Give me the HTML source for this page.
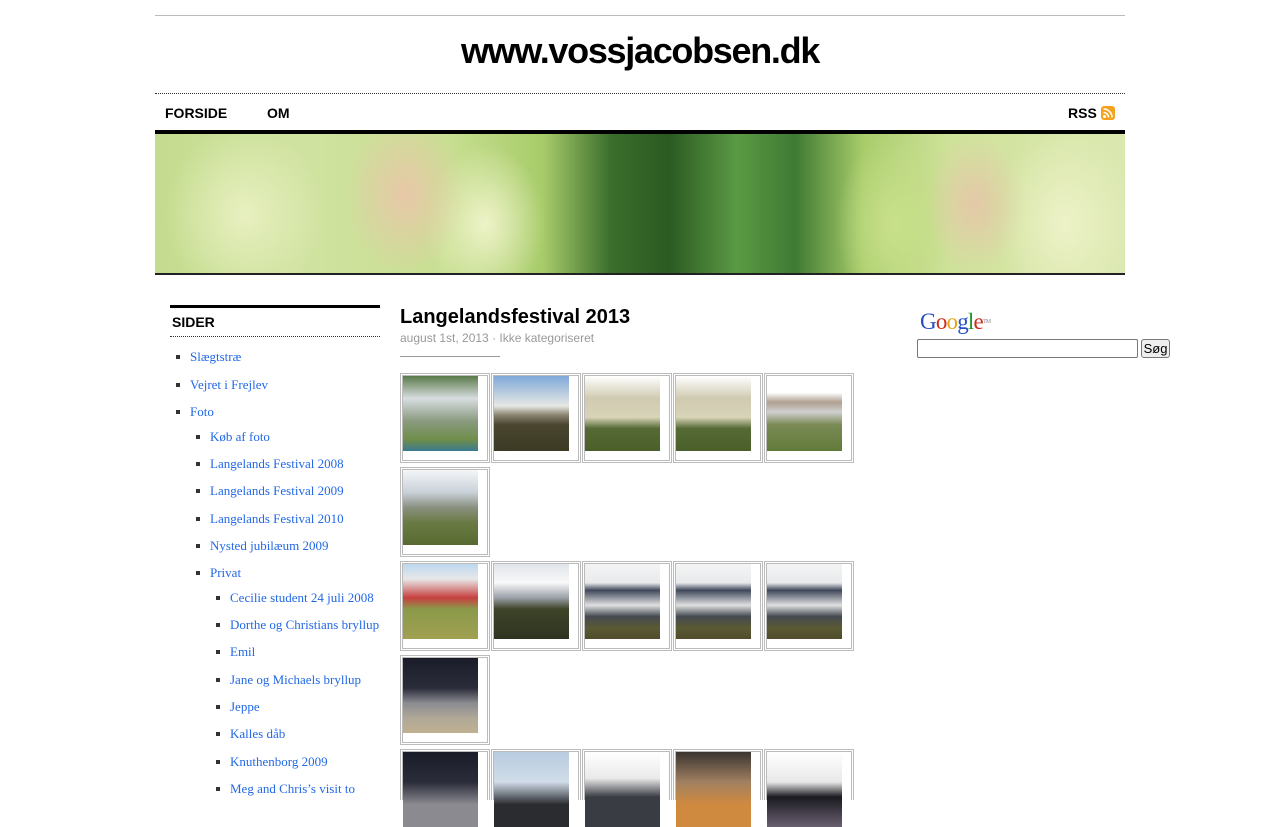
<!DOCTYPE html>
<html><head><meta charset="utf-8"><style>
*{margin:0;padding:0;box-sizing:border-box}
body{width:1280px;height:800px;overflow:hidden;background:#fff;font-family:"Liberation Sans",sans-serif;position:relative}
.a{position:absolute}
.li{position:absolute;font-family:"Liberation Serif",serif;font-size:13px;line-height:16px;color:#2268e6;white-space:nowrap}
.li:before{content:"";position:absolute;left:-14px;top:6px;width:4px;height:4px;background:#333}
.th{position:absolute;width:90px;height:90px;border:3px double #bbb;background:#fff}
.th div{width:75px;height:75px}
</style></head><body>
<div class="a" style="left:155px;top:15px;width:970px;border-top:1px solid #bbb"></div>
<div class="a" style="left:155px;top:29px;width:970px;text-align:center;font-size:36px;font-weight:bold;letter-spacing:-1.3px;color:#000;line-height:44px">www.vossjacobsen.dk</div>
<div class="a" style="left:155px;top:93px;width:970px;border-top:1px dotted #333"></div>
<div class="a" style="left:165px;top:105px;font-size:14px;font-weight:bold;line-height:17px">FORSIDE</div>
<div class="a" style="left:267px;top:105px;font-size:14px;font-weight:bold;line-height:17px">OM</div>
<div class="a" style="left:1068px;top:105px;font-size:14px;font-weight:bold;line-height:17px">RSS</div>
<div class="a" style="left:1101px;top:106px;width:14px;height:14px;background:#f7a21b;border-radius:3px">
<svg width="14" height="14" viewBox="0 0 14 14"><circle cx="3.5" cy="10.5" r="1.5" fill="#fff"/><path d="M2.5 6.5a5 5 0 0 1 5 5M2.5 3a8.5 8.5 0 0 1 8.5 8.5" stroke="#fff" stroke-width="1.6" fill="none"/></svg></div>
<div class="a" style="left:155px;top:130px;width:970px;height:4px;background:#000"></div>
<div class="a" style="left:155px;top:134px;width:970px;height:139px;background:
radial-gradient(ellipse 80px 90px at 90px 80px,#e8f0c0,rgba(220,235,170,0) 100%),
radial-gradient(ellipse 60px 80px at 250px 60px,#e8c8a8,rgba(230,210,160,0) 100%),
radial-gradient(ellipse 60px 80px at 330px 90px,#eef3c8,rgba(230,240,180,0) 100%),
radial-gradient(ellipse 50px 70px at 820px 70px,#e4c8a8,rgba(230,200,160,0) 100%),
radial-gradient(ellipse 70px 100px at 910px 90px,#edf2c8,rgba(230,240,190,0) 100%),
radial-gradient(ellipse 60px 90px at 740px 90px,#c8e08a,rgba(200,225,140,0) 100%),
linear-gradient(90deg,#c4dc8e 0%,#d0e2a0 15%,#c8df92 30%,#a8cc6a 40%,#3a6e2c 47%,#2c5a22 53%,#5a9a44 60%,#3f7a33 66%,#a8cc6a 73%,#cfe29a 82%,#dbe8b0 100%)"></div>
<div class="a" style="left:155px;top:273px;width:970px;height:2px;background:#222"></div>

<div class="a" style="left:170px;top:305px;width:210px;height:3px;background:#000"></div>
<div class="a" style="left:172px;top:314px;font-size:14px;font-weight:bold;line-height:17px">SIDER</div>
<div class="a" style="left:170px;top:336px;width:210px;border-top:1px dotted #333"></div>
<div class="li" style="left:190px;top:349px">Slægtstræ</div>
<div class="li" style="left:190px;top:377px">Vejret i Frejlev</div>
<div class="li" style="left:190px;top:404px">Foto</div>
<div class="li" style="left:210px;top:429px">Køb af foto</div>
<div class="li" style="left:210px;top:456px">Langelands Festival 2008</div>
<div class="li" style="left:210px;top:483px">Langelands Festival 2009</div>
<div class="li" style="left:210px;top:511px">Langelands Festival 2010</div>
<div class="li" style="left:210px;top:538px">Nysted jubilæum 2009</div>
<div class="li" style="left:210px;top:565px">Privat</div>
<div class="li" style="left:230px;top:590px">Cecilie student 24 juli 2008</div>
<div class="li" style="left:230px;top:617px">Dorthe og Christians bryllup</div>
<div class="li" style="left:230px;top:644px">Emil</div>
<div class="li" style="left:230px;top:672px">Jane og Michaels bryllup</div>
<div class="li" style="left:230px;top:699px">Jeppe</div>
<div class="li" style="left:230px;top:726px">Kalles dåb</div>
<div class="li" style="left:230px;top:754px">Knuthenborg 2009</div>
<div class="li" style="left:230px;top:781px">Meg and Chris’s visit to</div>

<div class="a" style="left:400px;top:305px;font-size:20px;font-weight:bold;line-height:24px">Langelandsfestival 2013</div>
<div class="a" style="left:400px;top:331px;font-size:12px;color:#999;line-height:14px">august 1st, 2013 · Ikke kategoriseret</div>
<div class="a" style="left:400px;top:356px;width:100px;border-top:1px solid #999"></div>

<div class="th" style="left:400px;top:373px"><div style="background:linear-gradient(180deg,#5a7a4a 0%,#d8dde0 30%,#8a9a80 60%,#6f8e4a 85%,#3a7a90 100%)"></div></div>
<div class="th" style="left:491px;top:373px"><div style="background:linear-gradient(180deg,#7fa8d8 0%,#e6e8e4 40%,#8a8470 52%,#4a4630 65%,#3c3a24 100%)"></div></div>
<div class="th" style="left:582px;top:373px"><div style="background:linear-gradient(180deg,#fff 0%,#cfcab0 30%,#d8d4b8 55%,#556a34 70%,#4a5f2a 100%)"></div></div>
<div class="th" style="left:673px;top:373px"><div style="background:linear-gradient(180deg,#fff 0%,#cfcab0 30%,#d8d4b8 55%,#556a34 70%,#4a5f2a 100%)"></div></div>
<div class="th" style="left:764px;top:373px"><div style="background:linear-gradient(180deg,#fff 0%,#fff 22%,#b0a090 35%,#d0d0d0 48%,#7a8a55 65%,#617a3a 100%)"></div></div>
<div class="th" style="left:400px;top:467px"><div style="background:linear-gradient(180deg,#f4f6f8 0%,#c8d0d8 30%,#8a9080 50%,#6a7a44 70%,#586a30 100%)"></div></div>

<div class="th" style="left:400px;top:561px"><div style="background:linear-gradient(180deg,#bcd8f0 0%,#e8e8e8 20%,#c84040 45%,#8a9a4a 60%,#a0a050 100%)"></div></div>
<div class="th" style="left:491px;top:561px"><div style="background:linear-gradient(180deg,#e0e4ea 0%,#f8f8f8 25%,#9aa0a8 45%,#3e4428 60%,#2e3420 100%)"></div></div>
<div class="th" style="left:582px;top:561px"><div style="background:linear-gradient(180deg,#f4f4f4 0%,#e8eaec 25%,#40485a 35%,#e0e0e0 55%,#444a50 70%,#5a5a34 85%,#504c2c 100%)"></div></div>
<div class="th" style="left:673px;top:561px"><div style="background:linear-gradient(180deg,#f4f4f4 0%,#e8eaec 25%,#40485a 35%,#e0e0e0 55%,#444a50 70%,#5a5a34 85%,#504c2c 100%)"></div></div>
<div class="th" style="left:764px;top:561px"><div style="background:linear-gradient(180deg,#f4f4f4 0%,#e8eaec 25%,#40485a 35%,#e0e0e0 55%,#444a50 70%,#5a5a34 85%,#504c2c 100%)"></div></div>
<div class="th" style="left:400px;top:655px"><div style="background:linear-gradient(180deg,#1a1c28 0%,#2a2c3a 40%,#8a8a90 60%,#b0a898 80%,#c0b090 100%)"></div></div>

<div class="th" style="left:400px;top:749px;height:51px;border-bottom:none"><div style="background:linear-gradient(180deg,#1a1c28 0%,#2a2c3a 40%,#8a8a90 70%)"></div></div>
<div class="th" style="left:491px;top:749px;height:51px;border-bottom:none"><div style="background:linear-gradient(180deg,#b8cce0 0%,#d0dce8 40%,#2a2c30 70%)"></div></div>
<div class="th" style="left:582px;top:749px;height:51px;border-bottom:none"><div style="background:linear-gradient(180deg,#fff 0%,#eaeaea 35%,#3a3c44 60%)"></div></div>
<div class="th" style="left:673px;top:749px;height:51px;border-bottom:none"><div style="background:linear-gradient(180deg,#3a3430 0%,#a08060 40%,#d08a40 70%)"></div></div>
<div class="th" style="left:764px;top:749px;height:51px;border-bottom:none"><div style="background:linear-gradient(180deg,#fff 0%,#e8e8e8 40%,#1a1a20 60%,#6a6070 100%)"></div></div>

<div class="a" style="left:920px;top:309px;font-family:'Liberation Serif',serif;font-size:23px;line-height:26px;letter-spacing:-0.8px"><span style="color:#2a4fc4">G</span><span style="color:#d02a1a">o</span><span style="color:#e2a612">o</span><span style="color:#2a4fc4">g</span><span style="color:#1a9a2a">l</span><span style="color:#d02a1a">e</span><span style="font-size:6px;color:#888;vertical-align:top">TM</span></div>
<div class="a" style="left:917px;top:339px;width:221px;height:19px;border:1px solid #777;border-radius:2px;background:#fff"></div>
<div class="a" style="left:1141px;top:339px;width:29px;height:19px;border:1px solid #777;border-radius:3px;background:#eee;font-size:13px;line-height:17px;text-align:center">Søg</div>
</body></html>
